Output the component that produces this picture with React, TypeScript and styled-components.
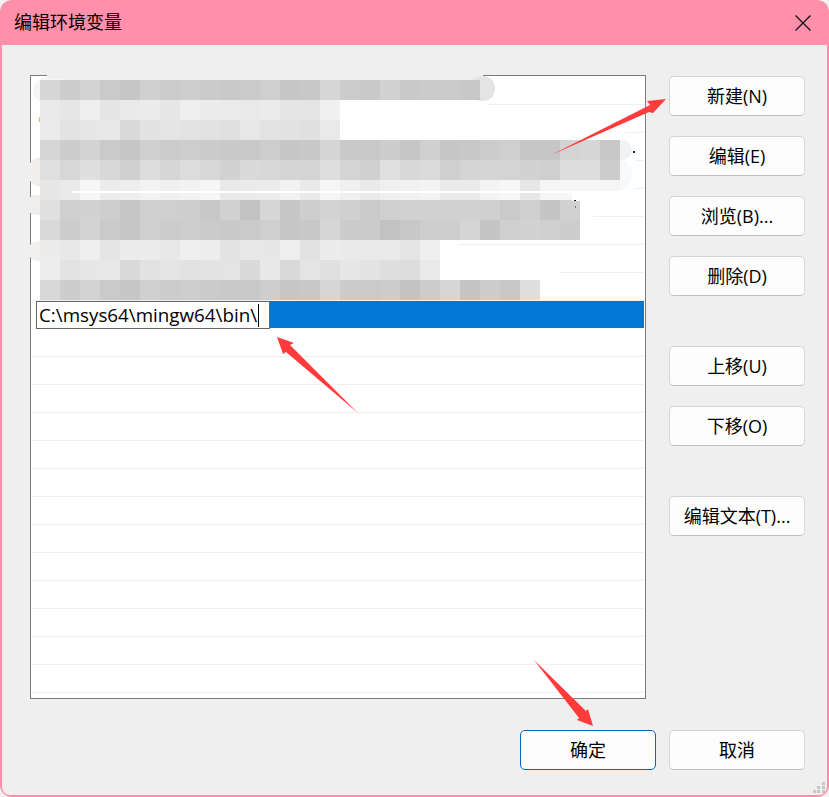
import React from "react";
import styled, { createGlobalStyle } from "styled-components";

const GlobalStyle = createGlobalStyle`
  * {
    box-sizing: border-box;
  }
  html,
  body {
    margin: 0;
    padding: 0;
    background: #f1f1f1;
  }
`;

const fontStack = `"Open Sans", "Noto Sans CJK SC", sans-serif`;
const pink = "#ff8fab";

const Window = styled.div`
  position: relative;
  display: flex;
  flex-direction: column;
  width: 829px;
  height: 797px;
  padding: 0 2px 2px;
  overflow: hidden;
  border-radius: 12px;
  background: ${pink};
  font-family: ${fontStack};
  color: #000;
`;
const TitleBar = styled.div`
  display: flex;
  align-items: center;
  justify-content: space-between;
  height: 45px;
  padding: 0 16px 0 12px;
`;
const Title = styled.div`
  font-family: "Noto Sans CJK SC", sans-serif;
  font-size: 18px;
  line-height: 18px;
  margin-top: -3px;
`;
const CloseIcon = styled.svg`
  display: block;
  width: 16px;
  height: 16px;
`;
const Client = styled.div`
  flex: 1;
  display: flex;
  flex-direction: column;
  padding: 30px 22px 0 28px;
  border-radius: 0 0 8px 8px;
  background: #efefef;
`;
const Main = styled.div`
  display: flex;
  gap: 23px;
`;
const List = styled.div`
  width: 616px;
  height: 624px;
  padding: 1px;
  overflow: hidden;
  border: 1px solid #7a7a85;
  background: #fff;
`;
const Row = styled.div<{ $selected?: boolean }>`
  display: flex;
  height: 28px;
  border-bottom: 1px solid ${(p) => (p.$selected ? "#fff" : "#f0f0f0")};
`;
const SelectionFill = styled.div`
  flex: 1;
  background: #0078d4;
`;
const EditField = styled.div`
  display: flex;
  align-items: center;
  width: 234px;
  height: 28px;
  margin-left: 4px;
  padding-left: 2px;
  border: 1px solid #666;
  background: #fff;
  font-size: 18.8px;
  white-space: nowrap;
`;
const Caret = styled.span`
  display: block;
  width: 1px;
  height: 23px;
  margin-left: 1px;
  background: #000;
`;
const SideBar = styled.div`
  display: flex;
  flex-direction: column;
  gap: 50px;
  padding-top: 1px;
`;
const ButtonGroup = styled.div`
  display: flex;
  flex-direction: column;
  gap: 20px;
`;
const Button = styled.button<{ $primary?: boolean }>`
  width: 136px;
  height: 40px;
  padding: 0;
  border: 1px solid ${(p) => (p.$primary ? "#0067c0" : "#d5d5d5")};
  border-bottom-color: ${(p) => (p.$primary ? "#0067c0" : "#c0c0c0")};
  border-radius: 5px;
  background: #fdfdfd;
  color: #000;
  font-family: ${fontStack};
  font-size: 18px;
  line-height: 38px;
`;
const Footer = styled.div`
  display: flex;
  justify-content: flex-end;
  gap: 13px;
  margin-top: 31px;
`;
const Overlay = styled.svg`
  position: absolute;
  top: 0;
  left: 0;
  width: 829px;
  height: 797px;
  pointer-events: none;
`;

// blurred-out paths in the list, one gray level per 20px block
const mosaic = [
  "d6 cd d3 ca c6 d0 cc ce cb c9 cb cf c6 c8 d6 cc c9 d2 c9 cb cb c8",
  "e9 e6 ee e5 ea eb e7 ee ec eb e9 eb e5 e4 f0",
  "eb e3 e7 e8 d9 e2 e5 e3 e2 e0 e8 e3 e2 e0 e9",
  "d6 cd d3 ca c6 d0 cc ce cb c9 c9 ce c6 c8 d5 c9 c9 cd c6 d0 c6 c8 cc cf c6 c6 d4 d6 c8",
  "e0 d7 df d8 d0 dd d6 dc d7 d2 da d8 d4 d4 de d4 d0 e0 d8 db cf d4 d5 d4 d2 cf dd dc cd",
  "e7 ea f6 ec ee f3 f0 f2 f6 e9 eb ec f2 e9 f6 ef ea f0 f1 f3 ea eb f3 f7 e6 f5 f6 f6 f5",
  "e0 cf d2 ce c6 d0 cf ce c8 d2 c2 d6 c6 ce d3 d0 ca d0 d2 d2 d1 d1 d0 ca d0 c5 d1",
  "d9 cd d3 ca c6 d0 cc ce cb c9 cb cf c6 c8 d6 cb cb c2 c8 ce ce d5 c5 d0 d2 d0 cd",
  "ec e8 ef e5 ec ec e8 ef ed e3 e8 e7 ee e2 ec ea e9 e9 e4 ee",
  "ed e3 e7 e8 d9 e2 e4 e2 e3 e4 da e8 d9 e4 e0 e7 e3 df dc e9",
  "d8 cd d3 ca c6 d0 cc ce cb c9 c9 ce c6 c8 d6 cb ca cd c3 cc d6 c5 cd c8 df",
].map((line) => line.split(" "));

// soft edges the blur left to the left of the blocks: x, y, height, colour
const halos: [number, number, number, string][] = [
  [33, 78, 25, "#f5f5f5"],
  [38, 105, 26, "#fff"],
  [37, 133, 26, "#fff"],
  [27, 157, 30, "#f0efed"],
  [26, 195, 20, "#efeeec"],
  [34, 217, 24, "#fff"],
  [28, 241, 20, "#f1f0ee"],
  [32, 261, 20, "#fff"],
  [35, 278, 21, "#fff"],
];

// row separators the blur wiped out: y, and the x where the line starts again
const wipedLines: [number, number][] = [
  [104, 487],
  [132, 625],
  [160, 635],
  [188, 635],
  [216, 593],
  [244, 458],
  [272, 560],
];

const pushButtons = ["新建(N)", "编辑(E)", "浏览(B)...", "删除(D)"];
const moveButtons = ["上移(U)", "下移(O)"];

export default function App() {
  return (
    <>
      <GlobalStyle />
      <Window>
        <TitleBar>
          <Title>编辑环境变量</Title>
          <CloseIcon viewBox="0 0 16 16">
            <path d="M0.5 0.5 L15.5 15.5 M15.5 0.5 L0.5 15.5" stroke="#111" strokeWidth="1.3" fill="none" />
          </CloseIcon>
        </TitleBar>
        <Client>
          <Main>
            <List>
              {Array.from({ length: 23 }, (_, i) =>
                i === 8 ? (
                  <Row key={i} $selected>
                    <EditField>
                      C:\msys64\mingw64\bin\
                      <Caret />
                    </EditField>
                    <SelectionFill />
                  </Row>
                ) : (
                  <Row key={i} />
                )
              )}
            </List>
            <SideBar>
              <ButtonGroup>
                {pushButtons.map((label) => (
                  <Button key={label}>{label}</Button>
                ))}
              </ButtonGroup>
              <ButtonGroup>
                {moveButtons.map((label) => (
                  <Button key={label}>{label}</Button>
                ))}
              </ButtonGroup>
              <ButtonGroup>
                <Button>编辑文本(T)...</Button>
              </ButtonGroup>
            </SideBar>
          </Main>
          <Footer>
            <Button $primary>确定</Button>
            <Button>取消</Button>
          </Footer>
        </Client>

        {/* Redacted entries */}
        <Overlay viewBox="0 0 829 797">
          <rect x="47" y="75" width="436" height="6" fill="#eeeeee" />
          <rect x="470" y="76" width="25" height="25" rx="12" fill="#e4e4e4" />
          {wipedLines.map(([y, x]) => (
            <rect key={y} x="32" y={y} width={x - 32} height="1" fill="#fff" />
          ))}
          {halos.map(([x, y, h, fill]) => (
            <rect key={`${x}-${y}`} x={x} y={y} width="40" height={h} rx={h / 2} fill={fill} />
          ))}
          <rect x="600" y="140" width="32" height="20" rx="10" fill="#f1f2f4" />
          <rect x="600" y="160" width="32" height="30" rx="14" fill="#f8f9fa" />
          {mosaic.map((line, r) =>
            line.map((gray, c) => (
              <rect
                key={`${r}-${c}`}
                x={40 + c * 20}
                y={80 + r * 20}
                width="20"
                height="20"
                fill={`#${gray}${gray}${gray}`}
              />
            ))
          )}
          <rect x="572" y="193" width="72" height="8" fill="#fff" />
          <rect x="72" y="191" width="560" height="2" fill="#fff" />
          <rect x="633" y="151" width="2" height="2" fill="#222" />
          <rect x="574" y="200" width="2" height="1" fill="#111" />
          <rect x="575" y="206" width="1" height="2" fill="#2a8fe0" />
          <rect x="39" y="117" width="1" height="5" fill="#f0b040" />
        </Overlay>

        {/* Annotation arrows and the window's resize grip */}
        <Overlay viewBox="0 0 829 797">
          <g fill="#ff3b3b">
            <polygon points="551,155 650,105 647,101 666,99 653,113 649,112" />
            <polygon points="277,337 294,343 290,345 358,413 286,352 283,354" />
            <polygon points="534,660 586,711 588,709 593,726 577,720 579,718" />
          </g>
          <g fill="#c6c6c6">
            <rect x="822" y="782" width="3" height="3" />
            <rect x="817" y="786" width="3" height="3" />
            <rect x="822" y="786" width="3" height="3" />
            <rect x="813" y="790" width="3" height="3" />
            <rect x="817" y="790" width="3" height="3" />
            <rect x="822" y="790" width="3" height="3" />
          </g>
        </Overlay>
      </Window>
    </>
  );
}
